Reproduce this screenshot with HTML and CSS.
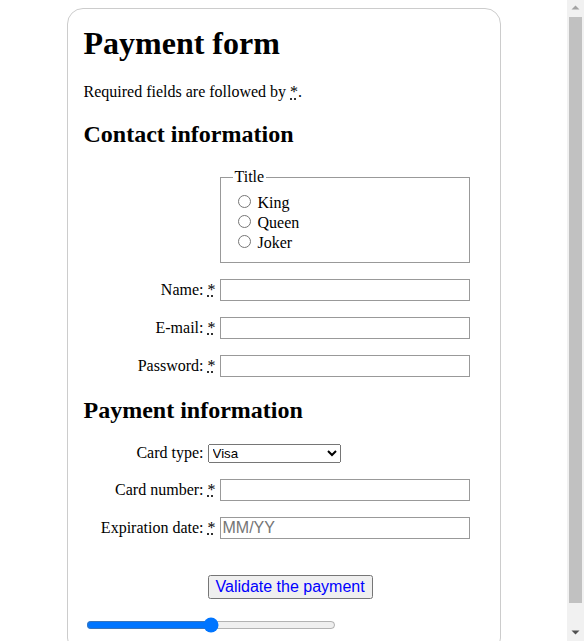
FILE: index.html
```html
<!DOCTYPE html>
<html lang="en">
<head>
<meta charset="utf-8">
<title>Payment form</title>
<link rel="stylesheet" href="styles.css">
</head>
<body class="page">
<form class="pay-form">
  <h1 class="title">Payment form</h1>
  <p class="row">Required fields are followed by <strong class="req"><abbr class="req-mark" title="required">*</abbr></strong>.</p>
  <section class="sect">
    <h2 class="sect-title">Contact information</h2>
    <fieldset class="titles">
      <legend class="titles-legend">Title</legend>
      <ul class="titles-list">
        <li class="titles-item"><input class="radio" type="radio" id="title_1" name="title" value="K"> <label for="title_1">King</label></li>
        <li class="titles-item"><input class="radio" type="radio" id="title_2" name="title" value="Q"> <label for="title_2">Queen</label></li>
        <li class="titles-item"><input class="radio" type="radio" id="title_3" name="title" value="J"> <label for="title_3">Joker</label></li>
      </ul>
    </fieldset>
    <p class="row"><label class="field-label" for="name"><span class="label-text">Name: </span> <strong class="req"><abbr class="req-mark" title="required">*</abbr></strong></label> <input class="field" type="text" id="name" name="username"></p>
    <p class="row"><label class="field-label" for="mail"><span class="label-text">E-mail: </span> <strong class="req"><abbr class="req-mark" title="required">*</abbr></strong></label> <input class="field" type="email" id="mail" name="usermail"></p>
    <p class="row"><label class="field-label" for="pwd"><span class="label-text">Password: </span> <strong class="req"><abbr class="req-mark" title="required">*</abbr></strong></label> <input class="field" type="password" id="pwd" name="password"></p>
  </section>
  <section class="sect">
    <h2 class="sect-title">Payment information</h2>
    <p class="row"><label class="field-label" for="card"><span class="label-text">Card type:</span></label> <select class="card-select" id="card" name="usercard"><option value="visa">Visa</option><option value="mc">Mastercard</option><option value="amex">American Express</option></select></p>
    <p class="row"><label class="field-label" for="number"><span class="label-text">Card number:</span> <strong class="req"><abbr class="req-mark" title="required">*</abbr></strong></label> <input class="field" type="tel" id="number" name="cardnumber"></p>
    <p class="row"><label class="field-label" for="expiration"><span class="label-text">Expiration date:</span> <strong class="req"><abbr class="req-mark" title="required">*</abbr></strong></label> <input class="field" type="tel" id="expiration" placeholder="MM/YY"></p>
  </section>
  <section class="sect">
    <p class="row"><button class="submit" type="submit">Validate the payment</button></p>
  </section>
  <div class="slider-row"><input class="slider" type="range" min="0" max="100" value="50"></div>
</form>
<div class="scrollbar" aria-hidden="true">
  <div class="sb-btn"><svg width="17" height="17" viewBox="0 0 17 17"><polygon points="4.5,9.5 8.5,5.5 12.5,9.5" fill="#a3a3a3"/></svg></div>
  <div class="sb-track"><div class="sb-thumb"></div></div>
  <div class="sb-btn"><svg width="17" height="17" viewBox="0 0 17 17"><polygon points="4.5,6.5 12.5,6.5 8.5,10.5" fill="#505050"/></svg></div>
</div>
</body>
</html>
```

FILE: styles.css
```css
.page {
  margin: 8px 25px 8px 8px;
  font-family: "Liberation Serif", "Times New Roman", serif;
  font-size: 16px;
  color: #000;
  background: #fff;
}

.scrollbar {
  position: fixed;
  top: 0;
  right: 0;
  width: 17px;
  height: 100vh;
  display: flex;
  flex-direction: column;
  background: #f1f1f1;
}

.sb-btn {
  height: 17px;
  flex: none;
}

.sb-btn svg {
  display: block;
}

.sb-track {
  flex: 1;
  padding: 0 2px;
}

.sb-thumb {
  height: 586px;
  background: #c1c1c1;
}

.pay-form {
  max-width: 400px;
  margin: 0 auto;
  padding: 1em;
  border: 1px solid #ccc;
  border-radius: 1em;
}

.title {
  margin-top: 0;
  font-size: 2em;
}

.sect-title {
  font-size: 1.5em;
}

.row {
  margin: 1em 0;
}

.req {
  font-weight: normal;
}

.req-mark {
  text-decoration: underline dotted;
}

.titles {
  width: 250px;
  box-sizing: border-box;
  margin: 0 0 0 136px;
  border: 1px solid #999;
}

.titles-list {
  margin: 0;
  padding: 0;
  list-style: none;
}

.label-text {
  display: inline-block;
  width: 120px;
  text-align: right;
}

.field {
  font: 1em "Liberation Sans", Arial, sans-serif;
  width: 250px;
  box-sizing: border-box;
  border: 1px solid #999;
}

.field:focus {
  border-color: #000;
}

.card-select {
  font-family: "Liberation Sans", Arial, sans-serif;
  font-size: 13.333px;
  width: 133px;
}

.submit {
  margin: 20px 0 0 124px;
  font: 1em "Liberation Sans", Arial, sans-serif;
  color: #00f;
}

.slider {
  width: 250px;
  box-sizing: border-box;
}
```
